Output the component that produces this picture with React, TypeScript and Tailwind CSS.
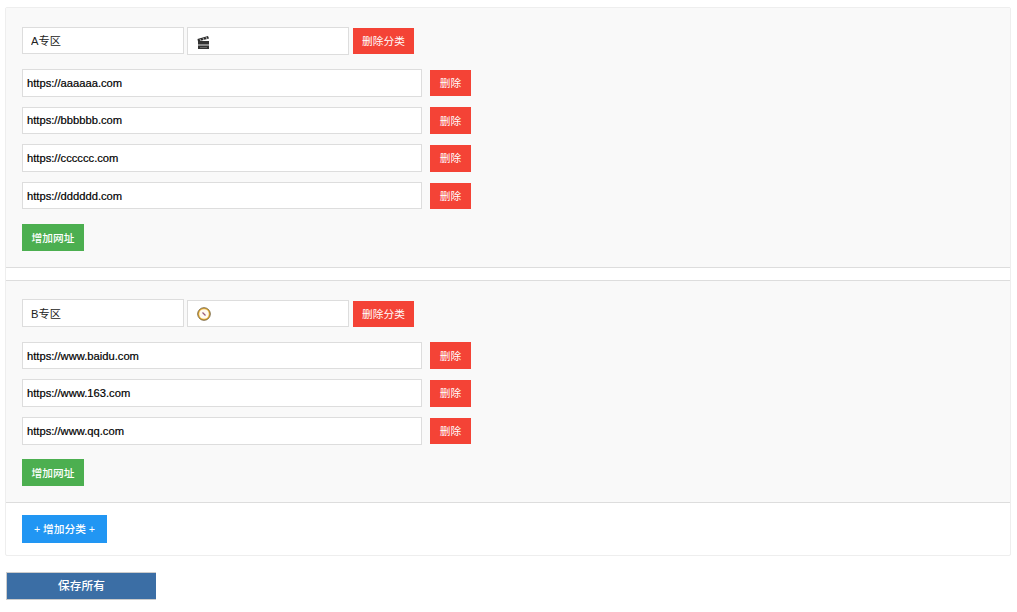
const font = "font-['Liberation_Sans','Noto_Sans_CJK_SC',sans-serif]";

const categories = [
  { name: "A专区", icon: "clapper", urls: ["https://aaaaaa.com", "https://bbbbbb.com", "https://cccccc.com", "https://dddddd.com"] },
  { name: "B专区", icon: "compass", urls: ["https://www.baidu.com", "https://www.163.com", "https://www.qq.com"] },
];

function Clapper() {
  return (
    <svg width="13" height="13" viewBox="0 0 13 13" className="absolute left-[10px] top-[9px]">
      <rect x="1" y="5" width="11" height="8" fill="#333" />
      <rect x="1" y="8" width="11" height="2" fill="#8c8c8c" />
      <path d="M0.5 3 L11 0 L12 2.5 L1 5.5 Z" fill="#2b2b2b" />
      <path d="M3 3 L4 5 M6 2 L7 4 M9 1 L10 3" stroke="#bbb" strokeWidth="1" />
      <path d="M3 11.5 H10" stroke="#666" strokeWidth="1" />
    </svg>
  );
}

function Compass() {
  return (
    <svg width="14" height="14" viewBox="0 0 14 14" className="absolute left-[10px] top-[7px]">
      <circle cx="7" cy="7" r="6.3" fill="#eeb53c" stroke="#5a4a2a" strokeWidth="0.8" />
      <circle cx="7" cy="7" r="4.8" fill="#fffaf0" />
      <path d="M5.5 5.5 L8.5 8.5" stroke="#9a5a7a" strokeWidth="1.3" />
    </svg>
  );
}

function Category({ name, icon, urls, last }: { name: string; icon: string; urls: string[]; last?: boolean }) {
  return (
    <div className={`bg-[#f9f9f9] border-[#ddd] px-4 pt-[18.7px] pb-4 border-b ${last ? "border-t" : "mb-[11.7px]"}`}>
      <div className="flex items-start mb-[14.4px]">
        <input
          readOnly
          value={name}
          className={`w-[162px] h-[27.6px] border border-[#ddd] bg-white px-2 text-[11.2px] text-[#222] outline-none ${font}`}
        />
        <div className="relative ml-[3px] mt-[0.4px]">
          <input readOnly value="" className="block w-[162px] h-[27.6px] border border-[#ddd] bg-white outline-none" />
          {icon === "clapper" ? <Clapper /> : <Compass />}
        </div>
        <button className={`ml-1 mt-[1.2px] w-[61px] h-[26px] bg-[#f44336] text-white text-[10.7px] ${font}`}>删除分类</button>
      </div>
      <div className="flex flex-col gap-[10px] mb-[14.95px]">
        {urls.map((u) => (
          <div key={u} className="flex items-start">
            <input
              readOnly
              value={u}
              className={`w-[400px] h-[27.6px] border border-[#ddd] bg-white px-1 text-[11.2px] text-black outline-none [-webkit-text-stroke:0.2px] ${font}`}
            />
            <button className={`ml-2 mt-[0.7px] w-[41px] h-[26.6px] bg-[#f44336] text-white text-[10.7px] ${font}`}>删除</button>
          </div>
        ))}
      </div>
      <button className={`block w-[62px] h-[26.6px] bg-[#4caf50] text-white text-[10.7px] font-medium ${font}`}>增加网址</button>
    </div>
  );
}

export default function App() {
  return (
    <div className={`min-h-[612px] bg-white pt-[7px] ${font}`}>
      <div className="ml-[5px] w-[1006px] border border-[#eee] rounded-[2px]">
        {categories.map((c, i) => (
          <Category key={c.name} name={c.name} icon={c.icon} urls={c.urls} last={i === categories.length - 1} />
        ))}
        <div className="px-4 py-3">
          <button className={`block w-[85px] h-[27.6px] bg-[#2196f3] text-white text-[10.7px] font-medium ${font}`}>+ 增加分类 +</button>
        </div>
      </div>
      <button className={`block ml-[6px] mt-[16.2px] w-[150px] h-[28px] bg-[#3b6ea5] border-l border-t border-b border-[#ccc] text-white text-[11.7px] font-medium ${font}`}>
        保存所有
      </button>
    </div>
  );
}
